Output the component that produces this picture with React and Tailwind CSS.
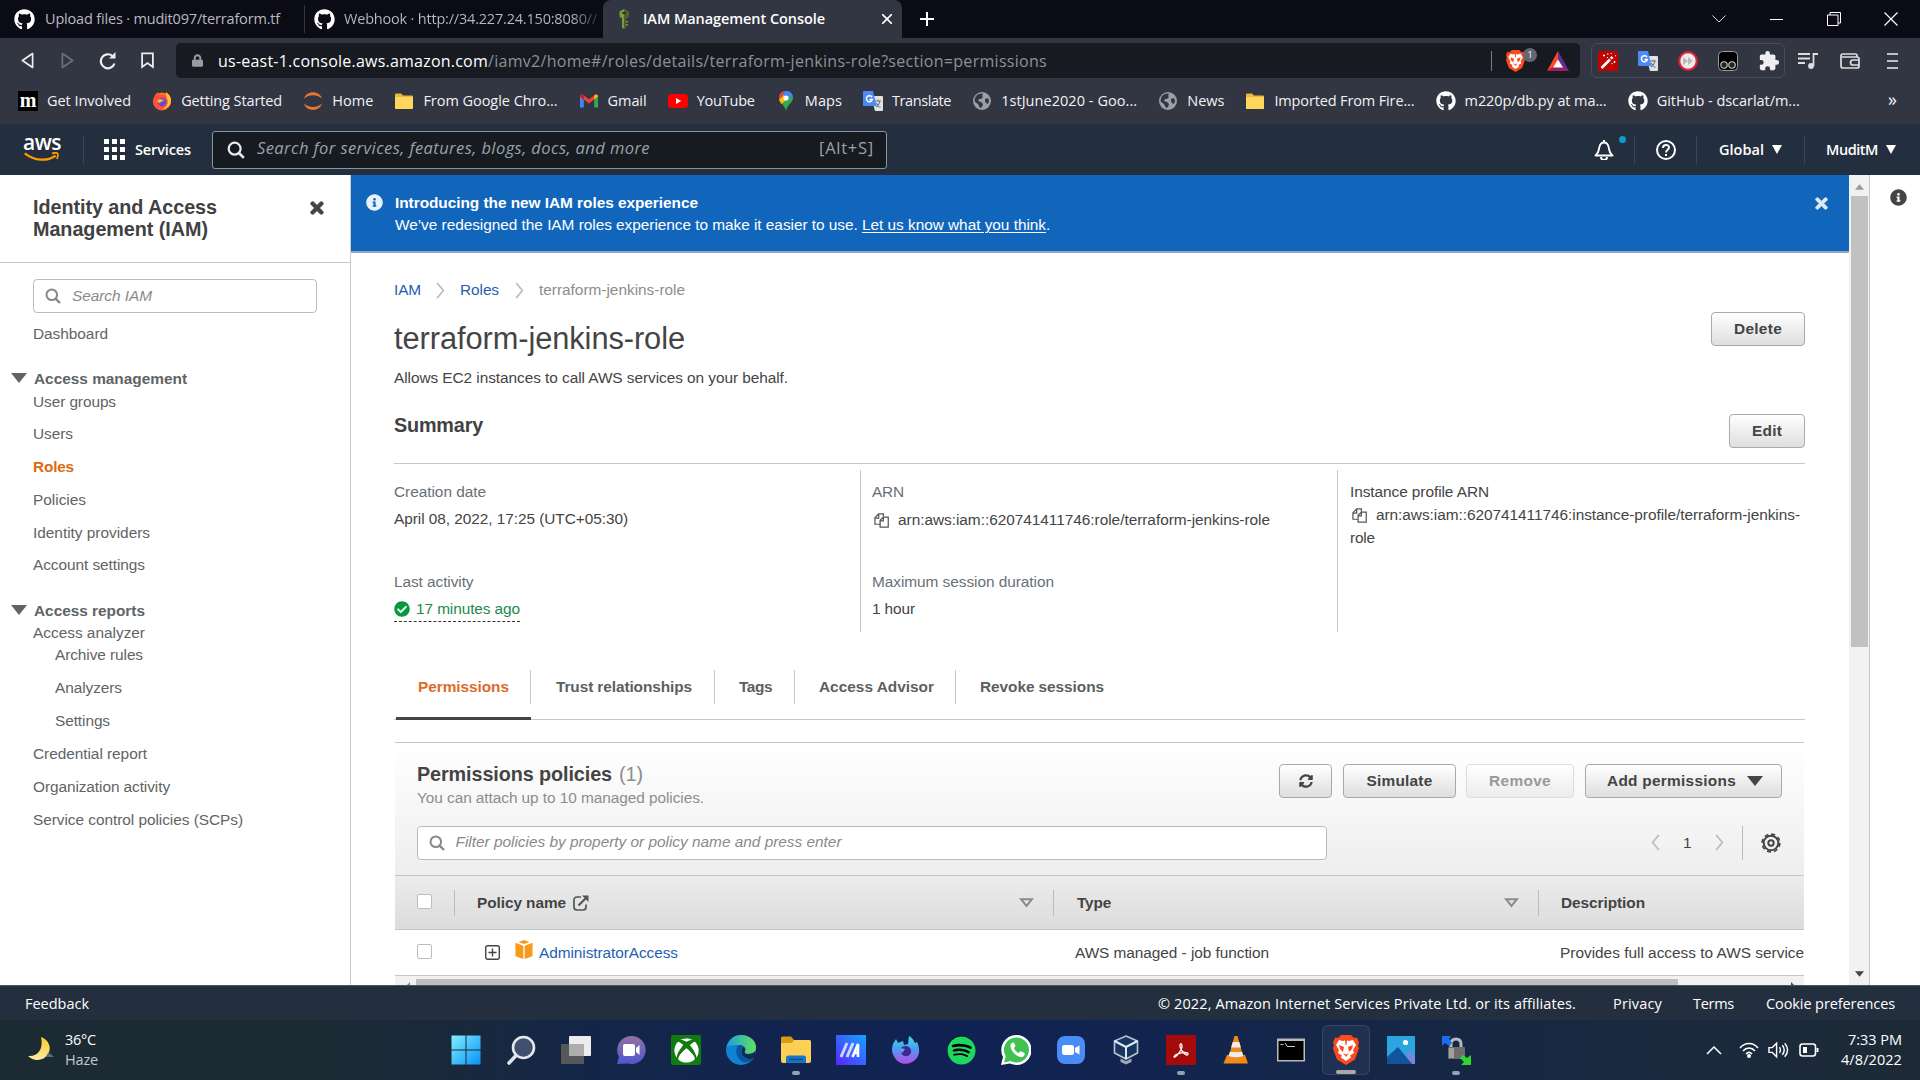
import React, { useLayoutEffect, useRef, useState } from "react";
import { FaGithub, FaSpotify, FaPuzzlePiece, FaSyncAlt, FaTimes, FaInfoCircle, FaCheckCircle, FaLock, FaXbox } from "react-icons/fa";

/* Text that keeps a given width by spreading its letters. */
function Fit({ w, className = "", children }) {
  const ref = useRef(null);
  const [spacing, setSpacing] = useState(0);
  useLayoutEffect(() => {
    const measure = () => {
      const el = ref.current;
      if (!el) return;
      el.style.letterSpacing = "0px";
      const natural = el.getBoundingClientRect().width;
      const next = (w - natural) / Math.max(1, el.textContent.length);
      el.style.letterSpacing = next + "px";
      setSpacing(next);
    };
    measure();
    document.fonts.ready.then(measure);
  }, [w]);
  return (
    <span ref={ref} className={"inline-block shrink-0 whitespace-nowrap " + className} style={{ letterSpacing: spacing }}>
      {children}
    </span>
  );
}

const Search = ({ className }) => (
  <svg viewBox="0 0 16 16" className={className} fill="none" stroke="currentColor" strokeWidth="2">
    <circle cx="6.8" cy="6.8" r="5.3" />
    <path d="M10.6 10.6L15 15" strokeWidth="2.4" />
  </svg>
);

const Globe = () => (
  <svg viewBox="0 0 20 20" className="size-5">
    <circle cx="10" cy="10" r="9" fill="#9aa0a6" />
    <path d="M4 5c2-2 5-3 7-2l-1 2 1 1-2 2H7l-1 2 3 1 2 2-1 3-2 1-2-4-3-2c-1-2 0-4 1-6zM13 8l3-1 1 3-1 3-2-1-1-2z" fill="#323542" />
  </svg>
);

const Folder = () => (
  <svg viewBox="0 0 20 20" className="size-5">
    <path d="M1 3.5a1 1 0 0 1 1-1h5l2 2h9a1 1 0 0 1 1 1V17a1 1 0 0 1-1 1H2a1 1 0 0 1-1-1z" fill="#e9b93a" />
    <path d="M1 6h18v11a1 1 0 0 1-1 1H2a1 1 0 0 1-1-1z" fill="#ffd65c" />
  </svg>
);

const Translate = () => (
  <svg viewBox="0 0 20 20" className="size-5">
    <path d="M8 5h11a1 1 0 0 1 1 1v13a1 1 0 0 1-1 1h-7z" fill="#dfe1e5" />
    <path d="M12 10h6M15 8.5V10M17 10c-.5 3-2.5 5-4 6M13 12c1 2 3 4 4.500 4.500" stroke="#70757a" strokeWidth="1.1" fill="none" />
    <path d="M1 0h9l3.500 15H1a1 1 0 0 1-1-1V1a1 1 0 0 1 1-1z" fill="#4c8bf5" />
    <path d="M9 6.200A3 3 0 1 0 9.300 8.500H6.500" stroke="#fff" strokeWidth="1.400" fill="none" />
  </svg>
);

const FirefoxIcon = () => (
  <svg viewBox="0 0 20 20" className="size-5">
    <circle cx="10" cy="10.500" r="9" fill="#ff7a18" />
    <path d="M2 7C3 3 5 2 6 1c0 2 1 3 2 3 3-1 5 0 6 2l1-4c3 2 4.500 5 4 9-1 6-7 8.500-11 7.500C3 17.500 0 13 2 7z" fill="#ff4f3a" />
    <path d="M14 1c4 3 6 7 4.500 11-1 4-5 6-8 6 4-2 6-5 5-9-.5-2-1.500-4-1.500-8z" fill="#ffc42e" />
    <circle cx="10" cy="11" r="4.200" fill="#5b4bd8" />
    <path d="M6 9c2-2 4 0 6 0-1 2-3 1-4 3-2 0-3-1-2-3z" fill="#ffb52e" />
  </svg>
);

const JupyterIcon = () => (
  <svg viewBox="0 0 20 20" className="size-5" fill="#e8762d">
    <path d="M1 7.500C3.500-1 16.500-1 19 7.500 14 3 6 3 1 7.500zM1 12.500c2.500 8.500 15.500 8.500 18 0-5 4.500-13 4.500-18 0z" />
  </svg>
);

const GmailIcon = () => (
  <svg viewBox="0 0 20 20" className="size-5">
    <path d="M1 5v11.500h3.800V9z" fill="#4285f4" /><path d="M19 5v11.500h-3.800V9z" fill="#34a853" />
    <path d="M1 5.500C1 3.500 3 3 4.300 4L10 8.300 15.700 4C17 3 19 3.500 19 5.500L10 12.500z" fill="#ea4335" />
    <path d="M15.200 4.400C17 2.800 19 3.500 19 5.500l-3.800 3.200z" fill="#fbbc04" />
    <path d="M1 5.500C1 3.500 3 2.800 4.800 4.400v4.300z" fill="#c5221f" />
  </svg>
);

const YoutubeIcon = () => (
  <svg viewBox="0 0 20 20" className="size-5">
    <rect x="0" y="3" width="20" height="14" rx="3.500" fill="#f00" /><path d="M8 7l5.200 3L8 13z" fill="#fff" />
  </svg>
);

const MapsIcon = () => (
  <svg viewBox="0 0 20 20" className="size-5">
    <path d="M10 0C5.500 0 3 3.500 3 7c0 4.500 6 7 7 13 1-6 7-8.500 7-13 0-3.500-2.500-7-7-7z" fill="#34a853" />
    <path d="M3.200 8C2.500 4 5 0 10 0l-1 6-4 5z" fill="#ea4335" /><path d="M9 0c4-.5 7 2 7.800 5L10 9 6.500 4z" fill="#4285f4" />
    <path d="M3.200 8.500L8 4l2 5-4.500 4C4.500 11.500 3.500 10.500 3.200 8.500z" fill="#fbbc04" /><circle cx="10" cy="7" r="2.600" fill="#fff" />
  </svg>
);

const MIcon = () => <span className="flex size-5 items-center justify-center bg-black pb-[3px] font-['Liberation_Serif',serif] text-[20px] font-bold leading-none text-white">m</span>;
const Gh = () => <FaGithub className="size-5 text-white" />;

const bookmarks = [
  [MIcon, "Get Involved", 84], [FirefoxIcon, "Getting Started", 101], [JupyterIcon, "Home", 41], [Folder, "From Google Chro...", 134],
  [GmailIcon, "Gmail", 39], [YoutubeIcon, "YouTube", 58], [MapsIcon, "Maps", 37], [Translate, "Translate", 59],
  [Globe, "1stJune2020 - Goo...", 136], [Globe, "News", 37], [Folder, "Imported From Fire...", 140], [Gh, "m220p/db.py at ma...", 142], [Gh, "GitHub - dscarlat/m...", 143],
];

function TabBar() {
  return (
    <div className="flex h-[38px] items-center bg-[#0b0b16] text-[14.500px] text-[#b9bac0]">
      <div className="flex w-[305px] items-center border-r border-[#33343f] pl-[14px] leading-7">
        <FaGithub className="size-[21px] text-white" />
        <Fit w={235} className="ml-[10px]">Upload files · mudit097/terraform.tf</Fit>
      </div>
      <div className="flex w-[298px] items-center overflow-hidden pl-[9px]">
        <FaGithub className="size-[21px] shrink-0 text-white" />
        <Fit w={253} className="ml-[9px] bg-gradient-to-r from-[#b9bac0] from-90% to-[#33343f] bg-clip-text text-transparent">Webhook · http://34.227.24.150:8080//</Fit>
      </div>
      <div className="flex h-[38px] w-[299px] items-center rounded-t-lg bg-[#323542] pl-[13px] text-white">
        <svg viewBox="0 0 16 20" className="h-5 w-4">
          <path d="M8 0l4.500 2.500v5L10 9.500v8.500L8 20l-2-1.500V9.500L3.500 7.500v-5z" fill="#759c3e" />
          <path d="M8 0l4.500 2.500v5L10 9.500v8.500L8 20z" fill="#4b612c" /><path d="M6.500 3h3v2h-3z" fill="#24311a" />
          <path d="M10 12h2v1.500h-2zM10 15h2v1.500h-2z" fill="#759c3e" />
        </svg>
        <Fit w={182} className="ml-[11px] font-semibold">IAM Management Console</Fit>
        <svg viewBox="0 0 10 10" className="ml-[57px] size-[10px]" stroke="#fff" strokeWidth="1.700"><path d="M0 0l10 10M10 0L0 10" /></svg>
      </div>
      <svg viewBox="0 0 14 14" className="ml-[18px] size-[14px]" stroke="#fff" strokeWidth="2"><path d="M7 0v14M0 7h14" /></svg>
      <div className="ml-auto flex items-center pr-[22px] text-white">
        <svg viewBox="0 0 14 8" className="h-2 w-[14px]" fill="none" stroke="#ddd" strokeWidth="1"><path d="M.5.5L7 7 13.500.5" /></svg>
        <span className="ml-[44px] h-px w-[13px] bg-white" />
        <svg viewBox="0 0 14 14" className="ml-[44px] size-[14px]" fill="none" stroke="#fff"><path d="M.5 3h10.500v10.500H.5zM3 3V.5h10.500V11H11" /></svg>
        <svg viewBox="0 0 14 14" className="ml-[43px] size-[14px]" stroke="#fff" strokeWidth="1.200"><path d="M.5.5l13 13M13.500.5L.5 13.500" /></svg>
      </div>
    </div>
  );
}

function BraveLogo({ className }) {
  return (
    <svg viewBox="0 0 26 30" className={className}>
      <path d="M8 0h10l3 3 3-.5 2 5-1 3 1 3-4 11-9 5.500L4 24.500 0 13.500l1-3-1-3 2-5 3 .5z" fill="#fb4a1f" />
      <path d="M6 5l4 1 3-1 3 1 4-1 3 5-3 5 1 3-4 2.500 1 2-5 3.500-5-3.500 1-2L5 18l1-3-3-5z" fill="#fff" />
      <path d="M6 10l5 2-1 5-3-3zM20 10l-5 2 1 5 3-3zM10 18l3 1.500 3-1.500-3 4zM12 5h2l-.5 5h-1z" fill="#fb4a1f" />
    </svg>
  );
}

function Toolbar() {
  return (
    <div className="flex h-[45px] items-center bg-[#323542]">
      <svg viewBox="0 0 14 18" className="ml-[21px] h-[17px] w-[13px]" fill="none" stroke="#eee" strokeWidth="1.800" strokeLinejoin="round"><path d="M12.500 1.500v15L1.500 9z" /></svg>
      <svg viewBox="0 0 14 18" className="ml-[27px] h-[17px] w-[13px]" fill="none" stroke="#6d6f7b" strokeWidth="1.800" strokeLinejoin="round"><path d="M1.500 1.500v15l11-7.500z" /></svg>
      <svg viewBox="0 0 18 18" className="ml-[25px] size-[18px]" fill="none" stroke="#eee" strokeWidth="2.200"><path d="M15.500 11.500A7 7 0 1 1 13.500 4" /><path d="M16.500 0v6.500H10z" fill="#eee" stroke="none" /></svg>
      <svg viewBox="0 0 14 18" className="ml-[24px] h-[17px] w-[13px]" fill="none" stroke="#eee" strokeWidth="1.900"><path d="M1.200 1.200h11.600V16L7 11.800 1.200 16z" /></svg>
      <div className="ml-[22px] flex h-[35px] w-[1404px] items-center rounded-[5px] bg-[#171a20] pl-[16px]">
        <FaLock className="h-[13px] w-[11px] text-[#9a9ba1]" />
        <div className="ml-[15px] flex text-[16px]">
          <Fit w={270} className="text-white">us-east-1.console.aws.amazon.com</Fit>
          <Fit w={559} className="text-[#8f9198]">/iamv2/home#/roles/details/terraform-jenkins-role?section=permissions</Fit>
        </div>
        <span className="ml-auto h-5 w-px bg-[#77797f]" />
        <div className="relative ml-[14px] flex h-6 w-[32px] items-center">
          <BraveLogo className="h-[22px] w-[19px]" />
          <span className="absolute right-[1px] top-[-1px] flex size-[14px] items-center justify-center rounded-full bg-[#636672] text-[9px] text-white">1</span>
        </div>
        <svg viewBox="0 0 22 20" className="ml-[9px] mr-[11px] h-[20px] w-[22px]">
          <path d="M11 0L0 20l11-5z" fill="#ff4724" /><path d="M11 0l11 20-11-5z" fill="#662d91" /><path d="M0 20h22l-6-4H6z" fill="#9e1f63" /><path d="M11 8.500l5 8H6z" fill="#fff" />
        </svg>
      </div>
      <div className="ml-[11px] flex h-[35px] w-[194px] items-center gap-5 rounded-md border border-[#484b58] pl-[6px]">
        <svg viewBox="0 0 20 20" className="size-5">
          <path d="M0 0h20v20H0z" fill="#c00404" />
          <path d="M3.500 17L12 8.500" stroke="#fff" strokeWidth="2.600" /><path d="M12.800 7.700L14.500 6" stroke="#fff" strokeWidth="2.600" />
          <path d="M5 4.500h2M6 3.500v2M9 3h1.500M15.500 11h2M16.500 10v2M13 3l.5-1M17 5l1-.5M9 6.500h1M14 12v1.200" stroke="#fff" strokeWidth="1" />
        </svg>
        <Translate />
        <svg viewBox="0 0 20 20" className="size-5"><circle cx="10" cy="10" r="8.800" fill="#ececec" stroke="#e01f3d" strokeWidth="2.200" /><path d="M5 6l5 4-5 4zM10 6l5 4-5 4z" fill="#b9b9b9" /></svg>
        <svg viewBox="0 0 20 20" className="size-5"><rect x=".5" y=".5" width="19" height="19" rx="4" fill="#000" stroke="#999" /><g fill="#222" stroke="#ccc" strokeWidth="1.100"><circle cx="6" cy="14" r="3.200" /><circle cx="14" cy="14" r="3.200" /></g></svg>
        <svg viewBox="0 0 24 24" className="size-[22px]" fill="#eee"><path d="M20.500 11H19V7c0-1.100-.9-2-2-2h-4V3.500a2.500 2.500 0 0 0-5 0V5H4c-1.100 0-2 .9-2 2v3.800h1.500a2.700 2.700 0 0 1 0 5.400H2V20c0 1.100.9 2 2 2h3.800v-1.500a2.700 2.700 0 0 1 5.400 0V22H17c1.100 0 2-.9 2-2v-4h1.500a2.500 2.500 0 0 0 0-5z" /></svg>
      </div>
      <svg viewBox="0 0 20 16" className="ml-[13px] h-4 w-5" fill="none" stroke="#ddd" strokeWidth="1.800"><path d="M0 1h12M0 5.500h12M0 10h7M15.500 13V1H20" /><circle cx="13" cy="13" r="2" fill="#ddd" /></svg>
      <svg viewBox="0 0 20 16" className="ml-[22px] h-4 w-5" fill="none" stroke="#ddd" strokeWidth="1.700"><path d="M17 4V2.500Q17 1 15 1H3Q1 1 1 3v10q0 2 2 2h14q2 0 2-2V6q0-2-2-2H2" /><path d="M19 7h-6a2 2 0 0 0 0 5h6" /></svg>
      <svg viewBox="0 0 11 16" className="ml-[27px] h-4 w-[11px]" stroke="#eee" strokeWidth="1.600"><path d="M0 1h11M0 8h11M0 15h11" /></svg>
    </div>
  );
}

function Bookmarks() {
  return (
    <div className="flex h-[41px] items-center bg-[#323542] pb-[5px] pl-[18px] text-[14.500px] text-[#f2f2f4]">
      {bookmarks.map(([Icon, label, w]) => (
        <div key={label} className="mr-[21.150px] flex shrink-0 items-center gap-[9px]">
          <span className="shrink-0"><Icon /></span>
          <Fit w={w}>{label}</Fit>
        </div>
      ))}
      <span className="ml-auto mr-[23px] pb-1 text-[18px] leading-none">»</span>
    </div>
  );
}

function AwsNav() {
  return (
    <div className="flex h-[51px] items-center bg-[#232f3e] text-[14.500px] font-semibold text-white">
      <div className="ml-[22px] flex w-[40px] flex-col items-center pb-[3px]">
        <span className="h-[17px] text-[21px] font-semibold leading-[15px] tracking-[-0.500px]">aws</span>
        <svg viewBox="0 0 40 11" className="h-[10px] w-10" fill="none" stroke="#ff9900"><path d="M1 1.500c11 8.500 24 9 34 2.500" strokeWidth="2.600" /><path d="M31 1.500c6-1.500 8-.5 5.500 6" strokeWidth="2" /></svg>
      </div>
      <span className="ml-[21px] h-7 w-px bg-[#3a4656]" />
      <div className="ml-[20px] grid grid-cols-3 gap-[3px]">
        {Array.from({ length: 9 }, (_, i) => <span key={i} className="size-[5px] bg-white" />)}
      </div>
      <Fit w={56} className="ml-[10px]">Services</Fit>
      <div className="ml-[21px] flex h-[38px] w-[675px] items-center rounded-[3px] border border-[#8a9597] bg-[#161b21] pl-[14px] pr-[12px] text-[#98a4a6] font-normal">
        <Search className="size-[18px] text-[#e8eaea]" />
        <Fit w={393} className="mb-[2px] ml-[12px] text-[16.500px] italic">Search for services, features, blogs, docs, and more</Fit>
        <Fit w={55} className="mb-[2px] ml-auto text-[16.500px]">[Alt+S]</Fit>
      </div>
      <div className="ml-auto flex items-center">
        <div className="relative">
          <svg viewBox="0 0 20 20" className="size-5" fill="none" stroke="#fff" strokeWidth="1.900"><path d="M1.500 15.500h17c-4-3-3-6-4-9C13.800 4 12 2.500 10 2.500S6.200 4 5.500 6.500c-1 3 0 6-4 9z" strokeLinejoin="round" /><path d="M10 2.500V0M7 17a3 3 0 0 0 6 0" /></svg>
          <span className="absolute left-[25px] top-[-4px] size-[7px] rounded-full bg-[#0a9fc8]" />
        </div>
        <span className="ml-[20px] h-7 w-px bg-[#3a4656]" />
        <svg viewBox="0 0 20 20" className="ml-[21px] size-5" fill="none" stroke="#fff" strokeWidth="2"><circle cx="10" cy="10" r="9" /><path d="M7 8c0-4 6-4 6-.5C13 10 10 9.500 10 12.500M10 14v2" /></svg>
        <span className="ml-[20px] h-7 w-px bg-[#3a4656]" />
        <Fit w={45} className="ml-[22px]">Global</Fit>
        <svg viewBox="0 0 10 9" className="ml-[8px] h-[9px] w-[10px]" fill="#fff"><path d="M0 0h10L5 9z" /></svg>
        <span className="ml-[22px] h-7 w-px bg-[#3a4656]" />
        <Fit w={52} className="ml-[21px]">MuditM</Fit>
        <svg viewBox="0 0 10 9" className="ml-[8px] mr-[24px] h-[9px] w-[10px]" fill="#fff"><path d="M0 0h10L5 9z" /></svg>
      </div>
    </div>
  );
}

const Item = ({ children, w, className = "mb-[9.800px]" }) => (
  <div className={"h-[23px] leading-[23px] " + className}><Fit w={w}>{children}</Fit></div>
);
const Group = ({ children, w }) => (
  <div className="-ml-[22px] flex h-[22.500px] items-center text-[15.400px] font-bold">
    <svg viewBox="0 0 16 10" className="mr-[7px] h-[10px] w-4" fill="currentColor"><path d="M0 0h16L8 10z" /></svg>
    <Fit w={w}>{children}</Fit>
  </div>
);

function Sidebar() {
  return (
    <aside className="w-[351px] shrink-0 border-r border-[#c8cdd0] text-[15.400px] text-[#5f6465]">
      <div className="flex h-[88px] items-start justify-between border-b border-[#c8c8c8] pl-[33px] pr-[24px] pt-[21px]">
        <h2 className="text-[19.800px] font-bold leading-[22px] text-[#414141]"><Fit w={184}>Identity and Access</Fit><br /><Fit w={175}>Management (IAM)</Fit></h2>
        <FaTimes className="mt-[3px] size-[18px] stroke-[#444] stroke-[30] text-[#444]" />
      </div>
      <div className="pl-[33px] pt-[16px]">
        <div className="mb-[8.500px] flex h-[34px] w-[284px] items-center rounded-[4px] border border-[#bbb] pl-[11px]">
          <Search className="size-[16px] text-[#888]" />
          <Fit w={80} className="ml-[11px] italic text-[#8a8a8a]">Search IAM</Fit>
        </div>
        <Item w={75} className="mb-[22.500px]">Dashboard</Item>
        <Group w={153}>Access management</Group>
        <Item w={83}>User groups</Item>
        <Item w={40}>Users</Item>
        <Item w={41} className="mb-[9.800px] font-bold text-[#dd6b10]">Roles</Item>
        <Item w={53}>Policies</Item>
        <Item w={117}>Identity providers</Item>
        <Item w={112} className="mb-[22.500px]">Account settings</Item>
        <Group w={111}>Access reports</Group>
        <Item w={112} className="">Access analyzer</Item>
        <Item w={88} className="-mt-[1px] mb-[10px] pl-[22px]">Archive rules</Item>
        <Item w={67} className="mb-[9.800px] pl-[22px]">Analyzers</Item>
        <Item w={55} className="mb-[9.800px] pl-[22px]">Settings</Item>
        <Item w={114}>Credential report</Item>
        <Item w={137}>Organization activity</Item>
        <Item w={210}>Service control policies (SCPs)</Item>
      </div>
    </aside>
  );
}

const Btn = ({ children, className = "", tone = "border-[#a9a9a9] to-[#dedede] text-[#444]" }) => (
  <button className={"flex h-[34px] shrink-0 items-center justify-center rounded-[4px] border bg-gradient-to-b from-white text-[15.400px] font-bold " + tone + " " + className}>{children}</button>
);
const Copy = () => (
  <svg viewBox="0 0 16 16" className="mr-[9px] inline-block size-[15px]" fill="none" stroke="#555" strokeWidth="1.300">
    <path d="M9 12H1V5l4-4h5v3M1 5.500h4V1" /><path d="M6.500 15V7.800l3.500-3.500h5.200V15zM6.500 8.300H10v-4" fill="#fff" />
  </svg>
);
const Chev = ({ left, className = "" }) => (
  <svg viewBox="0 0 9 18" className={"h-[17px] w-[9px] shrink-0 " + className} fill="none" stroke="#bbb" strokeWidth="1.800"><path d={left ? "M8 1L1.500 9 8 17" : "M1 1l6.500 8L1 17"} /></svg>
);
const SortIcon = ({ className }) => (
  <svg viewBox="0 0 15 10" className={"h-[10px] w-[15px] shrink-0 " + className} fill="none" stroke="#8a8a8a" strokeWidth="2"><path d="M2 1.200h11L7.500 8z" /></svg>
);

function Banner() {
  return (
    <div className="flex h-[78px] items-start border-b-2 border-[#8fa9c4] bg-[#1166bb] text-[15.400px] text-white">
      <FaInfoCircle className="ml-[15px] mt-[19px] size-[17px] text-[#e8f2fb]" />
      <div className="ml-[12px] mt-[17px] leading-[22px]">
        <Fit w={303} className="font-bold">Introducing the new IAM roles experience</Fit><br />
        <Fit w={467}>We’ve redesigned the IAM roles experience to make it easier to use.&nbsp;</Fit>
        <Fit w={184} className="underline underline-offset-2">Let us know what you think</Fit>.
      </div>
      <FaTimes className="ml-auto mr-[19px] mt-[20px] size-[17px] stroke-[#dfe9f2] stroke-[30] text-[#dfe9f2]" />
    </div>
  );
}

function Summary() {
  return (
    <div className="flex h-[162px] text-[15.400px] leading-[22px] text-[#444]">
      <div className="flex w-[466px] flex-col pt-[11px]">
        <Fit w={92} className="self-start text-[#687078]">Creation date</Fit>
        <Fit w={234} className="mt-[5px] self-start">April 08, 2022, 17:25 (UTC+05:30)</Fit>
        <Fit w={79.500} className="mt-[41px] self-start text-[#687078]">Last activity</Fit>
        <div className="mt-[4px] flex h-[24.500px] items-center self-start border-b border-dashed border-[#333] text-[#1d8a4a]">
          <FaCheckCircle className="mr-[6px] size-4 text-[#079a3d]" /><Fit w={104}>17 minutes ago</Fit>
        </div>
      </div>
      <div className="flex w-[477px] flex-col border-l border-[#c8c8c8] pl-[11px] pt-[11px]">
        <Fit w={32} className="self-start text-[#687078]">ARN</Fit>
        <div className="mt-[6px] flex items-center pl-[2px]"><Copy /><Fit w={372}>arn:aws:iam::620741411746:role/terraform-jenkins-role</Fit></div>
        <Fit w={182} className="mt-[40px] self-start text-[#687078]">Maximum session duration</Fit>
        <Fit w={43} className="mt-[5px] self-start">1 hour</Fit>
      </div>
      <div className="flex flex-col border-l border-[#c8c8c8] pl-[12px] pt-[11px]">
        <Fit w={139} className="self-start">Instance profile ARN</Fit>
        <div className="mt-[1px] flex items-center pl-[2px]"><Copy /><Fit w={424}>arn:aws:iam::620741411746:instance-profile/terraform-jenkins-</Fit></div>
        <Fit w={25} className="mt-[1px] self-start">role</Fit>
      </div>
    </div>
  );
}

const tabs = [["Trust relationships", 136, "pl-[25px] w-[184px]"], ["Tags", 33, "pl-[24px] w-[80px]"], ["Access Advisor", 115, "pl-[24px] w-[161px]"]];

function Panel() {
  return (
    <section className="ml-px mt-[22px] w-[1409px] overflow-hidden border-t border-[#c4c4c4] text-[15.400px] text-[#444]">
      <div className="h-[132px] bg-gradient-to-b from-white to-[#eeeeee] px-[22px]">
        <div className="flex h-[82.500px] items-start justify-between">
          <div className="pt-[20px]">
            <div className="flex gap-[7px] text-[19.800px] leading-[23px]"><Fit w={195} className="font-bold">Permissions policies</Fit><Fit w={24} className="text-[#8d8d8d]">(1)</Fit></div>
            <div className="leading-[24px] text-[#8d8d8d]"><Fit w={287}>You can attach up to 10 managed policies.</Fit></div>
          </div>
          <div className="flex pt-[21px]">
            <Btn className="w-[53px]"><FaSyncAlt className="size-[14px]" /></Btn>
            <Btn className="ml-[11px] w-[113px]"><Fit w={66}>Simulate</Fit></Btn>
            <Btn className="ml-[10px] w-[108px]" tone="border-[#dcdcdc] to-[#ececec] text-[#999]"><Fit w={62}>Remove</Fit></Btn>
            <Btn className="ml-[11px] w-[197px]"><Fit w={129} className="ml-[3px]">Add permissions</Fit><svg viewBox="0 0 16 10" className="ml-[11px] h-[10px] w-4" fill="#444"><path d="M0 0h16L8 10z" /></svg></Btn>
          </div>
        </div>
        <div className="flex items-center">
          <div className="flex h-[34px] w-[910px] items-center rounded-[4px] border border-[#bbb] bg-white pl-[11px]">
            <Search className="size-[16px] text-[#888]" />
            <Fit w={386} className="mb-px ml-[10.500px] italic text-[#8a8a8a]">Filter policies by property or policy name and press enter</Fit>
          </div>
          <Chev left className="ml-[324px]" />
          <span className="ml-[23px] w-2">1</span>
          <Chev className="ml-[24px]" />
          <span className="ml-[18px] h-[34px] w-px bg-[#bbb]" />
          <svg viewBox="0 0 20 20" className="ml-[18px] size-[20px]" fill="none" stroke="#444"><circle cx="10" cy="10" r="7.300" strokeWidth="2" /><circle cx="10" cy="10" r="8.900" strokeWidth="1.600" strokeDasharray="4 2.990" /><circle cx="10" cy="10" r="2.700" strokeWidth="2" /></svg>
        </div>
      </div>
      <div className="flex h-[55px] items-center border-y border-[#c4c4c4] bg-gradient-to-b from-[#ececec] to-[#dcdcdc] font-bold">
        <span className="mb-[2px] ml-[22px] size-[15px] rounded-[2px] border border-[#bdbdbd] bg-white" />
        <span className="ml-[22px] h-[26px] w-px bg-[#bbb]" />
        <Fit w={89} className="ml-[22px]">Policy name</Fit>
        <svg viewBox="0 0 16 16" className="ml-[7px] size-[16px]" fill="none" stroke="#555" strokeWidth="1.700"><path d="M8 2H4Q1 2 1 5v7q0 3 3 3h6q3 0 3-3V9.500" /><path d="M5.500 10.500L13 3" strokeWidth="2.200" /><path d="M9 .5h6.500V7z" fill="#555" stroke="none" /></svg>
        <SortIcon className="ml-[430px]" />
        <span className="ml-[19px] h-[26px] w-px bg-[#bbb]" />
        <Fit w={34} className="ml-[23px]">Type</Fit>
        <SortIcon className="ml-[393px]" />
        <span className="ml-[19px] h-[26px] w-px bg-[#bbb]" />
        <Fit w={84} className="ml-[22px]">Description</Fit>
      </div>
      <div className="flex h-[46px] items-center border-b border-[#c4c4c4] bg-white">
        <span className="mb-[2px] ml-[22px] size-[15px] shrink-0 rounded-[2px] border border-[#bdbdbd] bg-white" />
        <svg viewBox="0 0 15 15" className="ml-[53px] size-[15px] shrink-0" fill="none" stroke="#444" strokeWidth="1.400"><rect x=".7" y=".7" width="13.600" height="13.600" rx="2" /><path d="M7.500 3.500v8M3.500 7.500h8" /></svg>
        <svg viewBox="0 0 18 20" className="mb-[6px] ml-[15px] h-[19px] w-[18px] shrink-0"><path d="M9 0l6 2-6 2.200L3 2zM0 3l8.300 3v14L0 17zM18 3L9.700 6v14l8.300-3z" fill="#f79a1a" /></svg>
        <Fit w={139} className="ml-[6px] text-[#1f5fb0]">AdministratorAccess</Fit>
        <Fit w={194} className="ml-[397px]">AWS managed - job function</Fit>
        <span className="ml-[291px] shrink-0 whitespace-nowrap">Provides full access to AWS services and resources.</span>
      </div>
    </section>
  );
}

function Content() {
  return (
    <main className="h-full w-[1498px] shrink-0 overflow-hidden">
      <Banner />
      <div className="pl-[43px] pr-[44px]">
        <div className="mt-[26px] flex h-[22px] items-center text-[15.400px] text-[#1f5fb0]">
          <Fit w={27}>IAM</Fit><Chev className="mx-[15px]" /><Fit w={39}>Roles</Fit><Chev className="mx-[15.500px]" /><Fit w={146} className="text-[#8d8d8d]">terraform-jenkins-role</Fit>
        </div>
        <div className="mt-[11px] flex h-[55px] items-start justify-between">
          <h1 className="pt-[7px] text-[30.800px] leading-[40px] text-[#444]"><Fit w={291}>terraform-jenkins-role</Fit></h1>
          <Btn className="w-[94px]"><Fit w={48}>Delete</Fit></Btn>
        </div>
        <div className="text-[15.400px] leading-[22px] text-[#444]"><Fit w={394}>Allows EC2 instances to call AWS services on your behalf.</Fit></div>
        <div className="flex h-[75px] items-start justify-between border-b border-[#c8c8c8] pt-[24px]">
          <h2 className="text-[19.800px] font-bold leading-[24px] text-[#414141]"><Fit w={89}>Summary</Fit></h2>
          <Btn className="mt-px w-[76px]"><Fit w={30}>Edit</Fit></Btn>
        </div>
        <div className="mt-[6px]"><Summary /></div>
        <div className="mt-[38px] flex h-[50px] items-start border-b border-[#c8c8c8] text-[15.400px] font-bold text-[#5c5f60]">
          <div className="ml-[2px] flex h-[50px] w-[135px] flex-col border-b-[3px] border-[#444] text-[#dd6b2a]">
            <div className="flex h-[34px] items-center border-r border-[#c8c8c8] pl-[22px]"><Fit w={91}>Permissions</Fit></div>
          </div>
          {tabs.map(([label, w, cls]) => (
            <div key={label} className={"flex h-[34px] items-center border-r border-[#c8c8c8] " + cls}><Fit w={w}>{label}</Fit></div>
          ))}
          <div className="flex h-[34px] items-center pl-[24px]"><Fit w={124}>Revoke sessions</Fit></div>
        </div>
        <Panel />
        <div className="ml-px flex h-[12px] w-[1409px] items-end bg-[#f1f1f1]">
          <svg viewBox="0 0 6 6" className="ml-[9px] size-[6px]" fill="#888"><path d="M6 0v6H0z" /></svg>
          <span className="ml-[6px] h-[9px] w-[1262px] bg-[#bfbfbf]" />
          <svg viewBox="0 0 6 6" className="ml-auto mr-[7px] size-[6px]" fill="#444"><path d="M0 0v6h6z" /></svg>
        </div>
      </div>
    </main>
  );
}

function Footer() {
  return (
    <div className="flex h-[35px] items-center border-t border-[#4a5560] bg-[#232f3e] pl-[25px] pr-[25px] pt-[2px] text-[14.500px] font-medium text-white">
      <Fit w={64}>Feedback</Fit>
      <Fit w={418} className="ml-auto">© 2022, Amazon Internet Services Private Ltd. or its affiliates.</Fit>
      <Fit w={49} className="ml-[37px]">Privacy</Fit>
      <Fit w={41} className="ml-[31px]">Terms</Fit>
      <Fit w={129} className="ml-[32px]">Cookie preferences</Fit>
    </div>
  );
}

const taskIcons = [
  <svg viewBox="0 0 30 30" className="size-[30px]"><defs><linearGradient id="win" x1="0" y1="0" x2="1" y2="1"><stop stopColor="#7df0ff" /><stop offset="1" stopColor="#0a90f5" /></linearGradient></defs><path d="M.5.500h14v14H.5zM15.500.500h14v14h-14zM.5 15.500h14v14H.5zM15.500 15.500h14v14h-14z" fill="url(#win)" /></svg>,
  <svg viewBox="0 0 30 30" className="size-[30px]"><circle cx="17.500" cy="12.500" r="10.500" fill="#41506e" stroke="#e4e8ee" strokeWidth="2.600" /><path d="M10 20.500L3 28" stroke="#dfe3ea" strokeWidth="3.600" strokeLinecap="round" /></svg>,
  <svg viewBox="0 0 30 30" className="size-[30px]"><rect x="8" y="1" width="22" height="20" rx="1" fill="#ececec" /><rect y="9" width="23" height="20" rx="1" fill="#575859" /><path d="M8 9h15v12H8z" fill="#adadad" /></svg>,
  <svg viewBox="0 0 30 30" className="size-[30px]"><defs><linearGradient id="chat" x1="0" y1="0" x2="0" y2="1"><stop stopColor="#93729f" /><stop offset="1" stopColor="#5056cf" /></linearGradient></defs><path d="M15 1a14 14 0 1 1-3 27.500L1 29l2-7A14 14 0 0 1 15 1z" fill="url(#chat)" /><rect x="7" y="9" width="12" height="12" rx="2" fill="#fff" /><path d="M20 13l3.500-3v10L20 17z" fill="#fff" /></svg>,
  <span className="flex size-[30px] items-center justify-center rounded-[2px] bg-[#107c10]"><FaXbox className="size-[25px] text-white" /></span>,
  <svg viewBox="0 0 30 30" className="size-[30px]"><defs><linearGradient id="edge" x1="0" y1="0" x2="1" y2="0"><stop stopColor="#1b9de2" /><stop offset="1" stopColor="#5fe45d" /></linearGradient></defs><circle cx="15" cy="15" r="15" fill="#1282d2" /><path d="M.5 13C2 5 8 0 15 0c9 0 15 6 15 12 0 5-4 7-8 7-3 0-4-1-3-3 1-3-1-6-6-6C7 10 2 10 .5 13z" fill="url(#edge)" /><path d="M11 12c-2 6 0 12 6 15 5 1 9-1 11-4-8 3-14-2-12-8 0-2 1-3 2-3-3-3-6-2-7 0z" fill="#0c55a5" /><path d="M19 16c-1 2 0 3 3 3 3 0 6-1 7.500-3L30 22l-2 1c-7 3-14-2-12-8 0-2 1-3 2-3 1 1 2 2 1 4z" fill="#102a50" /></svg>,
  <svg viewBox="0 0 30 30" className="size-[30px]"><path d="M0 3q0-1.500 1.500-1.500H10L13 5h16v6H0z" fill="#d99a16" /><path d="M0 8h11l2-3h15.500Q30 5 30 6.500V26q0 2-2 2H2q-2 0-2-2z" fill="#fcd054" /><path d="M5 28v-5q0-2.500 2.500-2.500h15Q25 20.500 25 23v5z" fill="#1a74c4" /><path d="M8 24.500h14" stroke="#0c4f90" strokeWidth="1.500" /></svg>,
  <svg viewBox="0 0 30 30" className="size-[30px]"><defs><linearGradient id="my" x1="0" y1="1" x2="1" y2="0"><stop stopColor="#5a25ff" /><stop offset="1" stopColor="#13a4ff" /></linearGradient></defs><path d="M0 0h30v30H0z" fill="url(#my)" /><path d="M5 22L11 8M11 22L17 8" stroke="#cfd4ff" strokeWidth="3" /><path d="M16.500 22L22 9v13M18 18h4" stroke="#fff" strokeWidth="2.600" fill="none" /></svg>,
  <svg viewBox="0 0 30 30" className="size-[30px]"><defs><linearGradient id="ffd" x1="0" y1="0" x2="0" y2="1"><stop stopColor="#35e0e8" /><stop offset=".45" stopColor="#4a9ff0" /><stop offset="1" stopColor="#b94ae8" /></linearGradient></defs><path d="M2 9l3-5 2 4 5-2 1 4 4-1 1-8c5 3 5 6 6 7l2-1c3 6 3 13-1 17-6 7-17 6-21-1C1 19 0 14 2 9z" fill="url(#ffd)" /><path d="M10 13c2-3 9-3 10 2 1 4-3 7-6 6-3 0-5-4-4-8z" fill="#3d2a92" /><path d="M9 13l5 1-2 3-2 1z" fill="#5fa4f5" /></svg>,
  <span className="flex size-[28px] items-center justify-center rounded-full bg-black"><FaSpotify className="size-[29px] shrink-0 text-[#1ed760]" /></span>,
  <svg viewBox="0 0 30 30" className="size-[30px]"><path d="M15 0a15 15 0 1 1-6 28.500L0 30l2-8A15 15 0 0 1 15 0z" fill="#fff" /><path d="M15.500 2.500a12.500 12.500 0 1 1-6 23.500L3 27.500l1.800-6A12.500 12.500 0 0 1 15.500 2.500z" fill="#3fc250" /><path d="M10.500 8c-4 4 4 15 11 14 3-1 2-4 2-4l-4-2-2 2c-2-1-4-3-4.500-5l1.500-2-1.500-3.500z" fill="#fff" /></svg>,
  <svg viewBox="0 0 30 30" className="size-[30px]"><rect x="1" y="1" width="28" height="28" rx="8" fill="#4a8cf6" /><rect x="6" y="10" width="12" height="10" rx="2.500" fill="#fff" /><path d="M19 13l4.500-2.500v9L19 17z" fill="#fff" /></svg>,
  <svg viewBox="0 0 30 30" className="size-[30px]"><path d="M15 1l11.500 5v12L15 24 3.500 18V6z" fill="#17365f" stroke="#b9c6d6" strokeWidth="1.600" /><path d="M3.500 6L15 12l11.500-6M15 12v12" fill="none" stroke="#dfe7ef" strokeWidth="2" /><path d="M9.500 23.500l5.500 2.500 5.500-2.500v3.500L15 29.500 9.500 27z" fill="#9aa7b8" /></svg>,
  <svg viewBox="0 0 30 30" className="size-[30px]"><path d="M0 0h30v30H0z" fill="#a50b0b" /><path d="M15 9c-2 0-1 5 2 8 2 3 5 4 5 2s-6-2-10 0c-4 1-5 4-3 3s6-6 7-10c0-2 0-3-1-3z" stroke="#fff" strokeWidth="1.300" fill="none" /></svg>,
  <svg viewBox="0 0 30 30" className="size-[30px]"><path d="M6 20h18l3 8.500H2.500z" fill="#f38b13" /><path d="M13.500 1h3L23 24q-8 3-16 0z" fill="#f08a1c" /><path d="M11.700 7h6.600l1.600 5.500h-9.800zM8.800 17h12.400l1.200 4q-7.500 2.500-14.900 0z" fill="#eee" /></svg>,
  <svg viewBox="0 0 30 30" className="size-[30px]"><path d="M1 3.500h28v23H1z" fill="#bbb" /><path d="M2.500 6h25v19h-25z" fill="#000" /><path d="M4.500 9.500h3M9 8l2 3M11 11.500h8" stroke="#ccc" strokeWidth="1" /></svg>,
  <BraveLogo className="h-[30px] w-[26px]" />,
  <svg viewBox="0 0 30 30" className="size-[30px]"><path d="M1 1h28v28H1z" fill="#2ba5df" /><path d="M18 29l4-14 7 7v7z" fill="#7a86d8" /><path d="M1 22l11-10 14 17H1z" fill="#12549b" /><circle cx="19.500" cy="7.500" r="2.600" fill="#fff" /></svg>,
  <svg viewBox="0 0 30 30" className="size-[30px]"><path d="M10 14V9q0-5 5-5t5 5v5" fill="none" stroke="#b5b9bd" strokeWidth="3" /><rect x="7" y="12" width="17" height="12" rx="1" fill="#6d6d6d" /><path d="M8 13h5v10H8z" fill="#a0a0a0" /><path d="M1 1h9l-2 3 3 4-3 3-4-3-3 3z" fill="#1b6df0" /><path d="M30 30H20l3-3-4-4 3-3 4 3 4-3z" fill="#2fd62f" /></svg>,
];
const running = { 6: "w-2 bg-[#93a0b5]", 13: "w-2 bg-[#93a0b5]", 16: "w-5 bg-[#a9a9a9]", 18: "w-2 bg-[#93a0b5]" };

function Taskbar() {
  return (
    <div className="flex h-[60px] items-center bg-gradient-to-r from-[#1c2a34] via-[#102254] via-50% to-[#1d2a35] text-[15px] text-white">
      <div className="flex h-full w-full items-center bg-gradient-to-r from-[#1c2a33] from-16% via-transparent via-30% to-transparent">
        <svg viewBox="0 0 30 30" className="ml-[26px] size-[30px]"><defs><linearGradient id="moon" x1="0" y1="0" x2="0" y2="1"><stop stopColor="#f7cf1e" /><stop offset="1" stopColor="#fdeaa8" /></linearGradient></defs><path d="M15 2c8 3 11 11 7 17-4 7-14 8-20 2 9 1 16-6 13-19z" fill="url(#moon)" /><path d="M20 22h8l-3-3-3-1z" fill="#5b6a77" /></svg>
        <div className="ml-[9px] flex w-[377px] flex-col text-[14.500px] leading-5">
          <Fit w={31} className="self-start">36°C</Fit>
          <Fit w={33} className="self-start text-[#c4c9ce]">Haze</Fit>
        </div>
        <div className="flex items-center">
          {taskIcons.map((icon, i) => (
            <div key={i} className={"relative mr-[7px] flex h-[50px] w-[48.030px] items-center justify-center rounded-md " + (i === 16 ? "border border-white/10 bg-white/5" : "")}>
              {icon}
              {running[i] && <span className={"absolute bottom-0 h-1 rounded-full " + running[i]} />}
            </div>
          ))}
        </div>
        <div className="ml-auto flex items-center">
          <svg viewBox="0 0 16 9" className="h-[9px] w-4" fill="none" stroke="#fff" strokeWidth="1.500"><path d="M1 8l7-7 7 7" /></svg>
          <svg viewBox="0 0 20 16" className="ml-[17px] h-4 w-5" fill="none" stroke="#fff" strokeWidth="1.600"><path d="M1 6c5-6 13-6 18 0M4 9c3.500-4 8.500-4 12 0M7 12c2-2.200 4-2.200 6 0" /><circle cx="10" cy="14" r="1.200" fill="#fff" /></svg>
          <svg viewBox="0 0 22 18" className="ml-[9px] h-[18px] w-[21px]" fill="none" stroke="#fff" strokeWidth="1.500"><path d="M1 6.500h3.500L9 2v14l-4.500-4.500H1zM12 6q2 3 0 6M15 4q4 5 0 10M17.500 2q6 7 0 14" /></svg>
          <svg viewBox="0 0 20 14" className="ml-[10px] h-[14px] w-5" fill="none" stroke="#fff" strokeWidth="1.600"><rect x="1" y="1" width="15.500" height="12" rx="2.500" /><path d="M18.500 5v4" strokeWidth="2" /><path d="M4 4h4v6H4z" fill="#fff" stroke="none" /></svg>
          <div className="ml-[22px] mr-[18px] flex flex-col items-end text-[14.500px] leading-5"><Fit w={54}>7:33 PM</Fit><Fit w={61}>4/8/2022</Fit></div>
        </div>
      </div>
    </div>
  );
}

export default function App() {
  return (
    <div className="flex h-[1080px] w-[1920px] flex-col overflow-hidden bg-white font-['Open_Sans','Noto_Sans',sans-serif]">
      <TabBar />
      <Toolbar />
      <Bookmarks />
      <AwsNav />
      <div className="flex h-[810px] shrink-0 overflow-hidden font-['Liberation_Sans',Arial,sans-serif]">
        <Sidebar />
        <Content />
        <div className="flex w-[21px] shrink-0 flex-col items-center border-r border-[#c8c8c8] bg-[#f1f1f1]">
          <svg viewBox="0 0 10 6" className="mt-[9px] h-[6px] w-[9px]" fill="#999"><path d="M5 0l5 6H0z" /></svg>
          <span className="mt-[6px] h-[451px] w-[17px] bg-[#c1c1c1]" />
          <svg viewBox="0 0 10 6" className="mb-[8px] mt-auto h-[6px] w-[9px]" fill="#444"><path d="M5 6L0 0h10z" /></svg>
        </div>
        <div className="flex flex-1 justify-center pl-[6px] pt-[14px]"><FaInfoCircle className="size-[17px] text-[#444]" /></div>
      </div>
      <Footer />
      <Taskbar />
    </div>
  );
}
